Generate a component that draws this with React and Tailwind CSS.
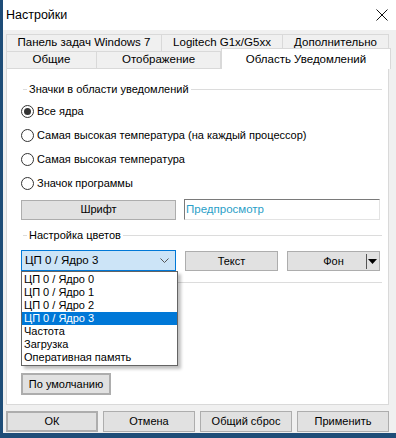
import { useState } from "react";

const ui = { fontFamily: '"Liberation Sans", Arial, sans-serif' };
const list = { fontFamily: '"Liberation Sans", Arial, sans-serif' };

const btn =
  "flex items-center justify-center bg-[#e1e1e1] border border-[#adadad] text-[11px] text-black whitespace-nowrap";

function Radio({ checked, label }) {
  return (
    <div className="flex items-center h-[13px] gap-[3px] pl-[14px]">
      <span className="w-[13px] h-[13px] rounded-full border border-[#333] bg-white flex items-center justify-center">
        {checked && <span className="w-[7px] h-[7px] rounded-full bg-[#333]" />}
      </span>
      <span className="text-[11px] leading-none">{label}</span>
    </div>
  );
}

function Group({ label }) {
  return (
    <div className="flex items-center h-[14px] pl-[16px] pr-[6px]">
      <span className="w-[4px] h-px bg-[#dcdcdc]" />
      <span className="px-[2px] text-[11px] leading-none">{label}</span>
      <span className="flex-1 h-px bg-[#dcdcdc]" />
    </div>
  );
}

const items = [
  "ЦП 0 / Ядро 0",
  "ЦП 0 / Ядро 1",
  "ЦП 0 / Ядро 2",
  "ЦП 0 / Ядро 3",
  "Частота",
  "Загрузка",
  "Оперативная память",
];

export default function App() {
  const [sel] = useState(3);
  return (
    <div
      className="w-[396px] h-[438px] bg-[#f0f0f0] border-l-[3px] border-b-[5px] border-[#1e4d78] flex flex-col text-black overflow-hidden"
      style={ui}
    >
      {/* заголовок */}
      <div className="h-[30px] bg-white flex items-center justify-between pl-[3px] pr-[8px] shrink-0">
        <span className="text-[12.5px]">Настройки</span>
        <svg width="12" height="12" viewBox="0 0 12 12" stroke="#111" strokeWidth="1">
          <path d="M0.5 0.5 L11.5 11.5 M11.5 0.5 L0.5 11.5" />
        </svg>
      </div>

      <div className="px-[3px] pt-[4px] flex flex-col">
        {/* вкладки */}
        <div className="flex h-[17px] text-[11.5px]">
          <div className="w-[156px] border border-b-0 border-[#d9d9d9] flex items-center justify-center">Панель задач Windows 7</div>
          <div className="w-[121px] border border-b-0 border-l-0 border-[#d9d9d9] flex items-center justify-center">Logitech G1x/G5xx</div>
          <div className="w-[106px] border border-b-0 border-l-0 border-[#d9d9d9] flex items-center justify-center">Дополнительно</div>
        </div>
        <div className="flex h-[17px] text-[11.5px] relative">
          <div className="w-[91px] border border-b-0 border-[#d9d9d9] flex items-center justify-center">Общие</div>
          <div className="w-[124px] border border-b-0 border-l-0 border-[#d9d9d9] flex items-center justify-center">Отображение</div>
          <div className="absolute left-[215px] top-[-3px] w-[170px] h-[21px] bg-white border border-b-0 border-[#d9d9d9] flex items-start pt-[2px] justify-center z-10">Область Уведомлений</div>
        </div>

        {/* страница */}
        <div className="w-[383px] h-[337px] bg-white border border-[#d9d9d9] flex flex-col pt-[13px]">
          <Group label="Значки в области уведомлений" />
          <div className="flex flex-col gap-[11px] mt-[9px]">
            <Radio checked label="Все ядра" />
            <Radio label="Самая высокая температура (на каждый процессор)" />
            <Radio label="Самая высокая температура" />
            <Radio label="Значок программы" />
          </div>

          <div className="flex items-center mt-[9px] pl-[14px]">
            <div className={`${btn} w-[155px] h-[20px]`}>Шрифт</div>
            <div className="ml-[8px] w-[196px] h-[21px] border border-[#7a7a7a] border-r-[#e3e3e3] border-b-[#e3e3e3] bg-white text-[11.5px] text-[#2aa0c8] flex items-center pl-[1px]">
              Предпросмотр
            </div>
          </div>

          <div className="mt-[8px]">
            <Group label="Настройка цветов" />
          </div>

          <div className="flex mt-[8px] pl-[14px] relative">
            <div className="w-[155px] h-[21px] bg-[#cce4f7] border border-[#0078d7] flex items-center justify-between pl-[3px] pr-[6px] text-[11.5px]">
              <span>ЦП 0 / Ядро 3</span>
              <svg width="9" height="5" viewBox="0 0 9 5" fill="none" stroke="#555">
                <path d="M0.5 0.5 L4.5 4.5 L8.5 0.5" />
              </svg>
            </div>
            <div className={`${btn} ml-[9px] w-[93px] h-[20px] mt-[1px]`}>Текст</div>
            <div className={`${btn} ml-[9px] w-[93px] h-[20px] mt-[1px] relative`}>
              Фон
              <span className="absolute right-[12px] top-[2px] w-px h-[15px] bg-[#555]" />
              <svg className="absolute right-[2px] top-[7px]" width="9" height="5" viewBox="0 0 9 5">
                <path d="M0 0 H9 L4.5 5 Z" fill="#000" />
              </svg>
            </div>

            {/* выпадающий список */}
            <div
              className="absolute left-[14px] top-[21px] w-[157px] bg-white border border-[#646464] shadow-[3px_3px_3px_rgba(0,0,0,0.25)] z-20 flex flex-col py-[1px]"
              style={list}
            >
              {items.map((t, i) => (
                <div
                  key={t}
                  className={`h-[13px] leading-[13px] text-[11px] pl-[2px] ${i === sel ? "bg-[#0078d7] text-white" : ""}`}
                >
                  {t}
                </div>
              ))}
            </div>
          </div>

          <div className="ml-[171px] mr-[6px] mt-[11px] h-px bg-[#dcdcdc]" />

          <div className="mt-[90px] pl-[14px]">
            <div className={`${btn} w-[90px] h-[22px] border-2 border-[#2a6cb0]`}>По умолчанию</div>
          </div>
        </div>

        {/* нижние кнопки */}
        <div className="flex gap-[5px] mt-[6px]">
          <div className={`${btn} w-[92px] h-[21px] border-2 border-[#2a6cb0]`}>ОК</div>
          <div className={`${btn} w-[92px] h-[21px]`}>Отмена</div>
          <div className={`${btn} w-[92px] h-[21px]`}>Общий сброс</div>
          <div className={`${btn} w-[92px] h-[21px]`}>Применить</div>
        </div>
      </div>
    </div>
  );
}
